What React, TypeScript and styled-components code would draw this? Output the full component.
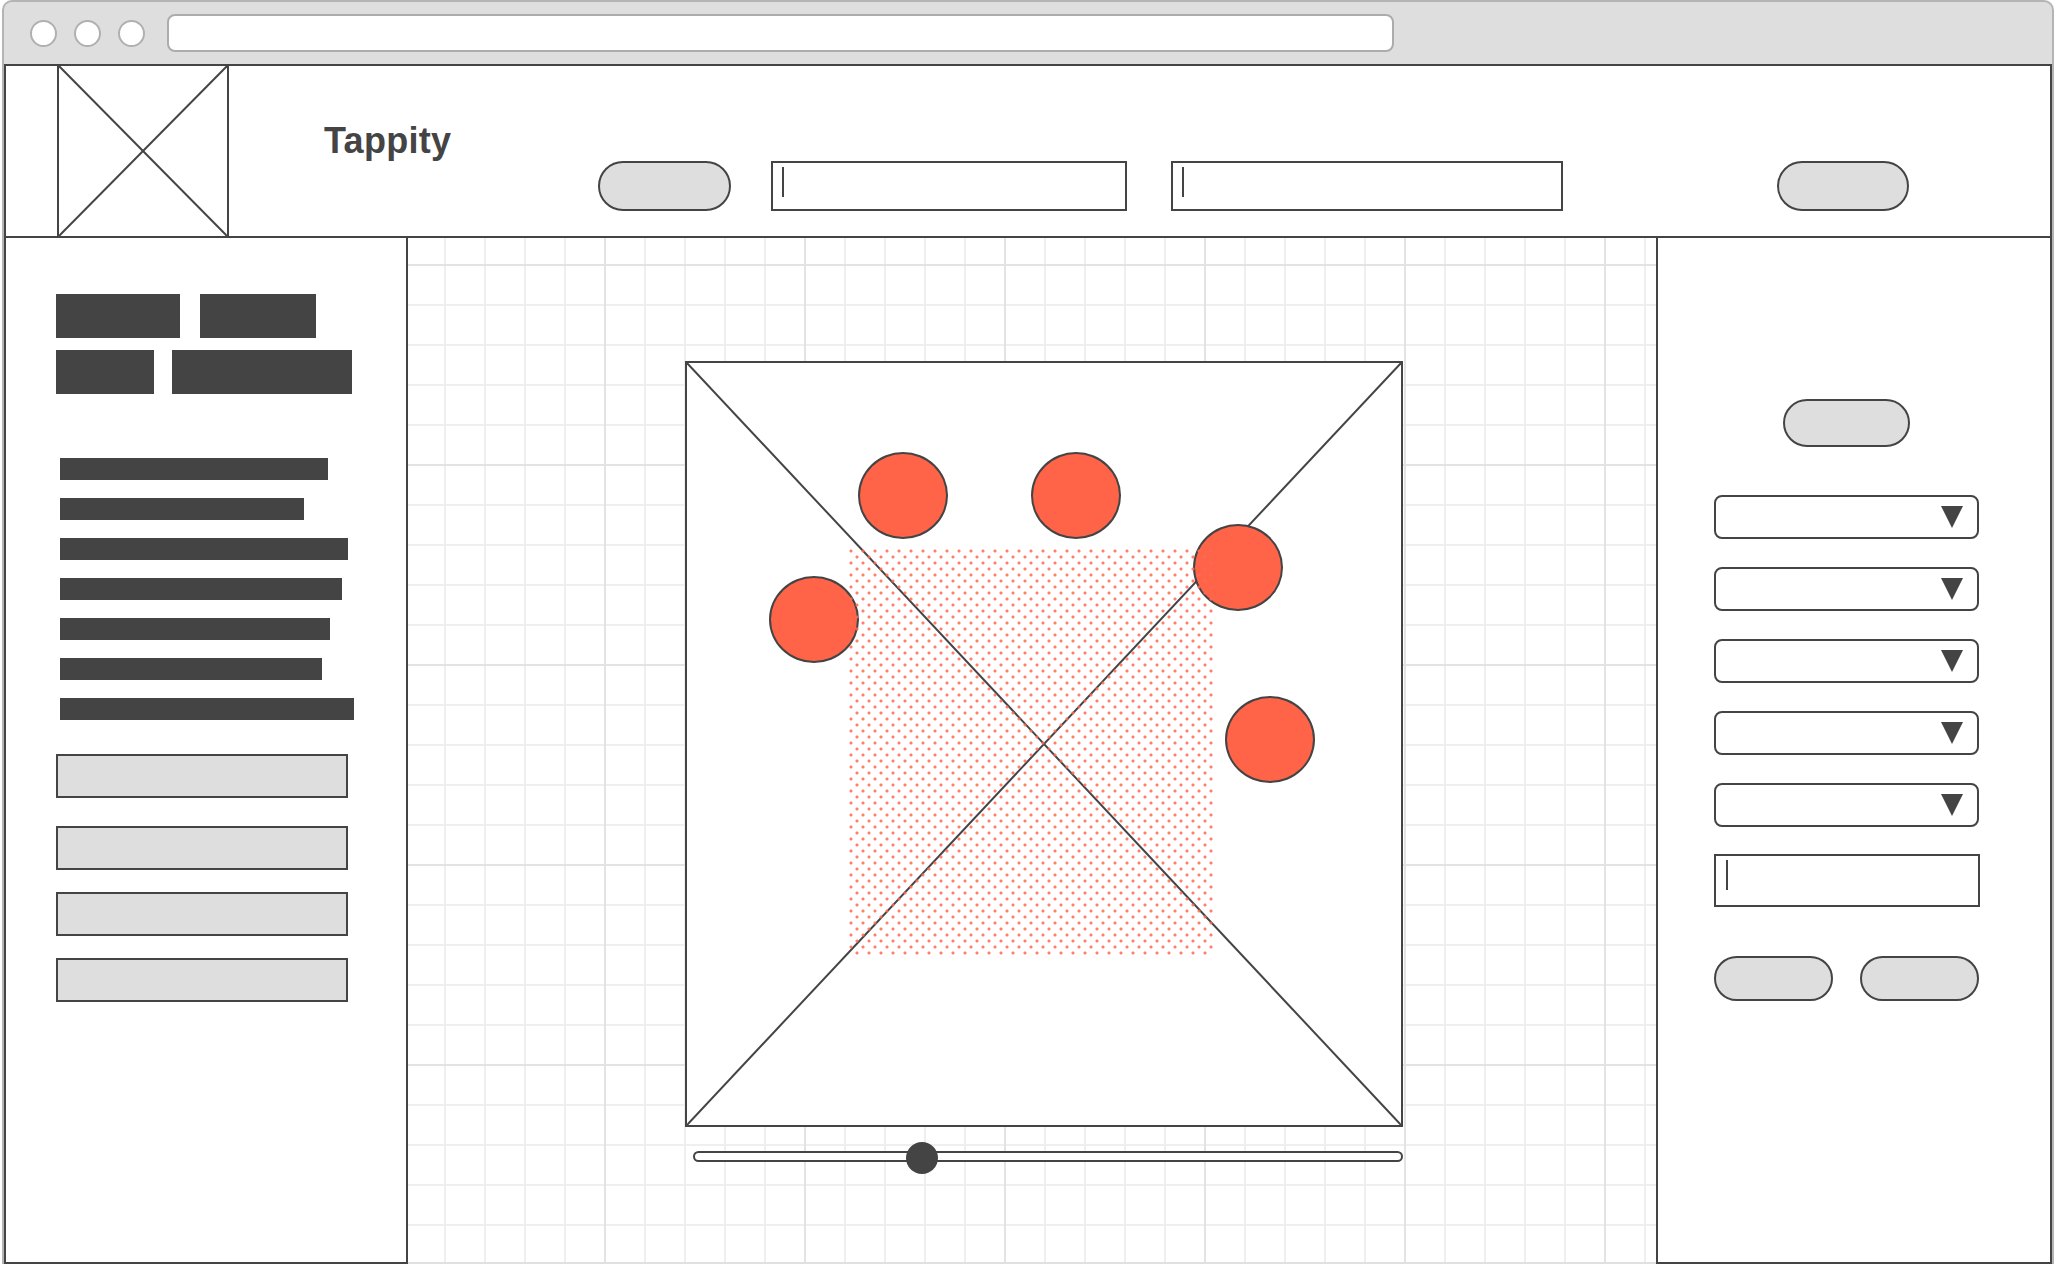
import React from "react";
import styled, { createGlobalStyle } from "styled-components";

const INK = "#444444";
const FILL = "#dedede";
const TOMATO = "#ff6448";

const Global = createGlobalStyle`
  html, body { margin: 0; padding: 0; background: #ffffff; overflow: hidden; }
  body { font-family: "Liberation Sans", Arial, sans-serif; }
  *, *::before, *::after { box-sizing: border-box; }
`;

const Window = styled.div`
  margin-left: 2px;
  width: 2052px;
  height: 1264px;
  border: 2px solid #b4b4b4;
  border-bottom: none;
  border-radius: 10px 10px 0 0;
  background: #dedede;
  display: flex;
  flex-direction: column;
  overflow: hidden;
`;

const Chrome = styled.div`
  flex: none;
  height: 62px;
  display: flex;
  align-items: center;
  padding-left: 26px;
`;

const Light = styled.span`
  flex: none;
  width: 27px;
  height: 27px;
  border-radius: 50%;
  background: #ffffff;
  border: 2px solid #b0b0b0;
  & + & {
    margin-left: 17px;
  }
`;

const UrlBar = styled.div`
  margin-left: 22px;
  width: 1227px;
  height: 38px;
  border: 2px solid #acacac;
  border-radius: 8px;
  background: #ffffff;
`;

const Page = styled.div`
  flex: 1;
  display: flex;
  flex-direction: column;
  background: #ffffff;
  border: 2px solid ${INK};
  border-bottom: none;
  min-height: 0;
`;

const Header = styled.header`
  flex: none;
  height: 172px;
  display: flex;
  align-items: stretch;
  border-bottom: 2px solid ${INK};
`;

const Logo = styled.div`
  flex: none;
  margin-left: 51px;
  width: 172px;
  border-left: 2px solid ${INK};
  border-right: 2px solid ${INK};
  svg {
    display: block;
    width: 100%;
    height: 100%;
  }
`;

const Title = styled.h1`
  flex: none;
  margin: 57px 0 0 95px;
  width: 274px;
  align-self: flex-start;
  font-size: 36px;
  line-height: 36px;
  font-weight: 700;
  color: ${INK};
  letter-spacing: 0.3px;
`;

const Pill = styled.div<{ $w: number; $h: number }>`
  flex: none;
  width: ${(p) => p.$w}px;
  height: ${(p) => p.$h}px;
  border: 2px solid ${INK};
  border-radius: ${(p) => p.$h / 2}px;
  background: ${FILL};
`;

const HeaderPill = styled(Pill)<{ $ml?: string; $mr?: number }>`
  align-self: flex-end;
  margin-bottom: 25px;
  margin-left: ${(p) => p.$ml ?? "0"};
  margin-right: ${(p) => p.$mr ?? 0}px;
`;

const TextInput = styled.div<{ $w: number; $h: number }>`
  flex: none;
  width: ${(p) => p.$w}px;
  height: ${(p) => p.$h}px;
  border: 2px solid ${INK};
  background: #ffffff;
  padding: 4px 9px;
  display: flex;
  align-items: flex-start;
`;

const HeaderInput = styled(TextInput)<{ $ml: number }>`
  align-self: flex-end;
  margin-bottom: 25px;
  margin-left: ${(p) => p.$ml}px;
`;

const Caret = styled.span`
  display: block;
  width: 2px;
  height: 30px;
  background: ${INK};
`;

const Body = styled.div`
  flex: 1;
  display: flex;
  min-height: 0;
`;

const LeftPanel = styled.aside`
  flex: none;
  width: 402px;
  border-right: 2px solid ${INK};
  border-bottom: 2px solid ${INK};
  padding: 56px 0 0 50px;
  display: flex;
  flex-direction: column;
`;

const ChipRow = styled.div<{ $gap: number }>`
  display: flex;
  gap: ${(p) => p.$gap}px;
  & + & {
    margin-top: 12px;
  }
`;

const Chip = styled.div<{ $w: number }>`
  width: ${(p) => p.$w}px;
  height: 44px;
  background: ${INK};
`;

const Bars = styled.div`
  margin-top: 64px;
  padding-left: 4px;
  display: flex;
  flex-direction: column;
  gap: 18px;
`;

const Bar = styled.div<{ $w: number }>`
  width: ${(p) => p.$w}px;
  height: 22px;
  background: ${INK};
`;

const NavList = styled.div`
  margin-top: 34px;
  display: flex;
  flex-direction: column;
`;

const NavBox = styled.div<{ $mt: number }>`
  margin-top: ${(p) => p.$mt}px;
  width: 292px;
  height: 44px;
  border: 2px solid ${INK};
  background: ${FILL};
`;

const Canvas = styled.main`
  flex: 1;
  min-width: 0;
  border-bottom: 2px solid #e0e0e0;
  padding: 123px 0 0 277px;
  background-color: #ffffff;
  background-image: linear-gradient(to right, #e3e3e3 2px, transparent 2px),
    linear-gradient(to bottom, #e3e3e3 2px, transparent 2px),
    linear-gradient(to right, #efefef 2px, transparent 2px),
    linear-gradient(to bottom, #efefef 2px, transparent 2px);
  background-size: 200px 200px, 200px 200px, 40px 40px, 40px 40px;
  background-position: 196px 0, 0 26px, 36px 0, 0 26px;
`;

const Stage = styled.div`
  width: 718px;
  display: flex;
  flex-direction: column;
`;

const ImageBox = styled.div`
  position: relative;
  width: 718px;
  height: 766px;
  border: 2px solid ${INK};
  background: #ffffff;
  svg {
    display: block;
    width: 100%;
    height: 100%;
  }
`;

const Marker = styled.div<{ $x: number; $y: number }>`
  position: absolute;
  left: ${(p) => p.$x}px;
  top: ${(p) => p.$y}px;
  width: 90px;
  height: 87px;
  border-radius: 50%;
  border: 2px solid ${INK};
  background: ${TOMATO};
`;

const Dots = styled.div`
  position: absolute;
  left: 161px;
  top: 185px;
  width: 365px;
  height: 407px;
  pointer-events: none;
  background-image: radial-gradient(circle, rgba(255, 105, 85, 0.85) 1.3px, transparent 1.8px),
    radial-gradient(circle, rgba(255, 105, 85, 0.85) 1.3px, transparent 1.8px);
  background-size: 12px 12px, 12px 12px;
  background-position: -3px -3px, 3px 3px;
`;

const Slider = styled.div`
  position: relative;
  margin: 15px 0 0 8px;
  width: 710px;
  height: 32px;
`;

const Track = styled.div`
  margin-top: 9px;
  height: 11px;
  border: 2px solid ${INK};
  border-radius: 6px;
  background: #ffffff;
`;

const Thumb = styled.div<{ $pos: number }>`
  position: absolute;
  top: 0;
  left: ${(p) => p.$pos}%;
  width: 32px;
  height: 32px;
  border-radius: 50%;
  background: ${INK};
`;

const RightPanel = styled.aside`
  flex: none;
  width: 394px;
  border-left: 2px solid ${INK};
  border-bottom: 2px solid ${INK};
  padding: 161px 0 0 56px;
`;

const Form = styled.div`
  width: 266px;
  display: flex;
  flex-direction: column;
`;

const CenterPill = styled(Pill)`
  align-self: center;
  margin-left: -2px;
`;

const Selects = styled.div`
  margin-top: 48px;
  display: flex;
  flex-direction: column;
  gap: 28px;
`;

const Select = styled.div`
  position: relative;
  width: 265px;
  height: 44px;
  border: 2px solid ${INK};
  border-radius: 8px;
  background: #ffffff;
  display: flex;
  align-items: center;
  justify-content: flex-end;
  padding-right: 14px;
`;

const Arrow = styled.span`
  width: 0;
  height: 0;
  border-left: 11px solid transparent;
  border-right: 11px solid transparent;
  border-top: 22px solid ${INK};
`;

const FormInput = styled(TextInput)`
  margin-top: 27px;
  padding-left: 10px;
`;

const ButtonRow = styled.div`
  margin-top: 49px;
  display: flex;
  justify-content: space-between;
  width: 265px;
`;

const Cross = () => (
  <svg viewBox="0 0 100 100" preserveAspectRatio="none">
    <line x1="0" y1="0" x2="100" y2="100" stroke={INK} strokeWidth="2" vectorEffect="non-scaling-stroke" />
    <line x1="100" y1="0" x2="0" y2="100" stroke={INK} strokeWidth="2" vectorEffect="non-scaling-stroke" />
  </svg>
);

const chipRows = [
  { gap: 20, widths: [124, 116] },
  { gap: 18, widths: [98, 180] },
];
const barWidths = [268, 244, 288, 282, 270, 262, 294];
const navGaps = [0, 28, 22, 22];
const markers = [
  { x: 171, y: 89 },
  { x: 344, y: 89 },
  { x: 506, y: 161 },
  { x: 82, y: 213 },
  { x: 538, y: 333 },
];

export default function App() {
  return (
    <>
      <Global />
      <Window>
        <Chrome>
          <Light />
          <Light />
          <Light />
          <UrlBar />
        </Chrome>
        <Page>
          <Header>
            <Logo>
              <Cross />
            </Logo>
            <Title>Tappity</Title>
            <HeaderPill $w={133} $h={50} />
            <HeaderInput $w={356} $h={50} $ml={40}>
              <Caret />
            </HeaderInput>
            <HeaderInput $w={392} $h={50} $ml={44}>
              <Caret />
            </HeaderInput>
            <HeaderPill $w={132} $h={50} $ml="auto" $mr={141} />
          </Header>
          <Body>
            <LeftPanel>
              {chipRows.map((row, i) => (
                <ChipRow key={i} $gap={row.gap}>
                  {row.widths.map((w, j) => (
                    <Chip key={j} $w={w} />
                  ))}
                </ChipRow>
              ))}
              <Bars>
                {barWidths.map((w, i) => (
                  <Bar key={i} $w={w} />
                ))}
              </Bars>
              <NavList>
                {navGaps.map((g, i) => (
                  <NavBox key={i} $mt={g} />
                ))}
              </NavList>
            </LeftPanel>
            <Canvas>
              <Stage>
                <ImageBox>
                  <Cross />
                  {markers.map((m, i) => (
                    <Marker key={i} $x={m.x} $y={m.y} />
                  ))}
                  <Dots />
                </ImageBox>
                <Slider>
                  <Track />
                  <Thumb $pos={30} />
                </Slider>
              </Stage>
            </Canvas>
            <RightPanel>
              <Form>
                <CenterPill $w={127} $h={48} />
                <Selects>
                  {[0, 1, 2, 3, 4].map((i) => (
                    <Select key={i}>
                      <Arrow />
                    </Select>
                  ))}
                </Selects>
                <FormInput $w={266} $h={53}>
                  <Caret />
                </FormInput>
                <ButtonRow>
                  <Pill $w={119} $h={45} />
                  <Pill $w={119} $h={45} />
                </ButtonRow>
              </Form>
            </RightPanel>
          </Body>
        </Page>
      </Window>
    </>
  );
}
